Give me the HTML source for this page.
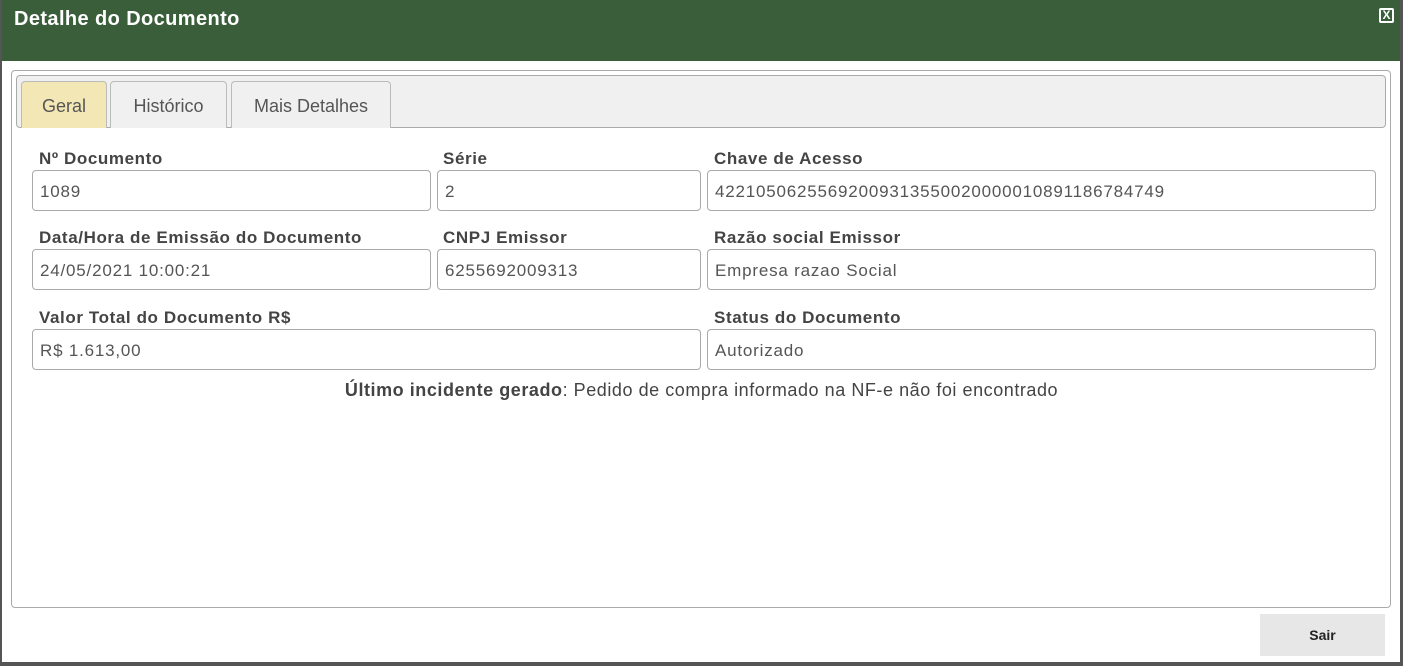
<!DOCTYPE html>
<html><head><meta charset="utf-8"><style>
*{margin:0;padding:0;box-sizing:border-box}
body{width:1403px;height:666px;overflow:hidden;background:#fff;font-family:"Liberation Sans",sans-serif;color:#444;position:relative}
.a{position:absolute}
.hdr{left:0;top:0;width:1403px;height:61px;background:#3b5e3a}
.title{left:14px;top:8px;color:#fff;font-weight:bold;font-size:20px;letter-spacing:0.4px}
.x{left:1379px;top:8px;width:15px;height:15px;border:2px solid #fff;border-radius:2px;color:#fff;font-size:12px;font-weight:bold;line-height:11px;text-align:center}
.panel{left:11px;top:70px;width:1380px;height:538px;border:1px solid #aaa;border-radius:4px}
.bar{left:16px;top:75px;width:1370px;height:53px;background:#f0f0f0;border:1px solid #aaa;border-radius:4px}
.tab{top:81px;height:47px;border:1px solid #bbb;border-bottom:none;border-radius:4px 4px 0 0;background:#f0f0f0;font-size:18px;line-height:48px;text-align:center;color:#555}
.lbl{font-weight:bold;font-size:17px;color:#444;letter-spacing:0.6px}
.in{height:41px;border:1px solid #aaa;border-radius:4px;font-size:17px;letter-spacing:0.8px;line-height:41px;padding-left:7px;color:#555}
.btn{left:1260px;top:614px;width:125px;height:42px;background:#e6e7e6;font-weight:bold;font-size:14px;color:#222;text-align:center;line-height:42px}
</style></head><body>
<div class="a hdr"></div>
<div class="a title">Detalhe do Documento</div>
<div class="a x">X</div>
<div class="a" style="left:0;top:0;width:2px;height:666px;background:#555"></div>
<div class="a" style="left:1400px;top:0;width:3px;height:666px;background:#555"></div>
<div class="a" style="left:0;top:662px;width:1403px;height:4px;background:#555"></div>
<div class="a panel"></div>
<div class="a bar"></div>
<div class="a tab" style="left:21px;width:86px;background:#f3e7b5">Geral</div>
<div class="a tab" style="left:110px;width:117px">Histórico</div>
<div class="a tab" style="left:231px;width:160px">Mais Detalhes</div>

<div class="a lbl" style="left:39px;top:149px">Nº Documento</div>
<div class="a lbl" style="left:443px;top:149px">Série</div>
<div class="a lbl" style="left:714px;top:149px">Chave de Acesso</div>
<div class="a in" style="left:32px;top:170px;width:399px">1089</div>
<div class="a in" style="left:437px;top:170px;width:264px">2</div>
<div class="a in" style="left:707px;top:170px;width:669px">42210506255692009313550020000010891186784749</div>

<div class="a lbl" style="left:39px;top:228px">Data/Hora de Emissão do Documento</div>
<div class="a lbl" style="left:443px;top:228px">CNPJ Emissor</div>
<div class="a lbl" style="left:714px;top:228px">Razão social Emissor</div>
<div class="a in" style="left:32px;top:249px;width:399px">24/05/2021 10:00:21</div>
<div class="a in" style="left:437px;top:249px;width:264px">6255692009313</div>
<div class="a in" style="left:707px;top:249px;width:669px">Empresa razao Social</div>

<div class="a lbl" style="left:39px;top:308px">Valor Total do Documento R$</div>
<div class="a lbl" style="left:714px;top:308px">Status do Documento</div>
<div class="a in" style="left:32px;top:329px;width:669px">R$ 1.613,00</div>
<div class="a in" style="left:707px;top:329px;width:669px">Autorizado</div>

<div class="a" style="left:0;width:1403px;top:380px;text-align:center;font-size:18px;letter-spacing:0.55px"><b>Último incidente gerado</b>: Pedido de compra informado na NF-e não foi encontrado</div>

<div class="a btn">Sair</div>
</body></html>
